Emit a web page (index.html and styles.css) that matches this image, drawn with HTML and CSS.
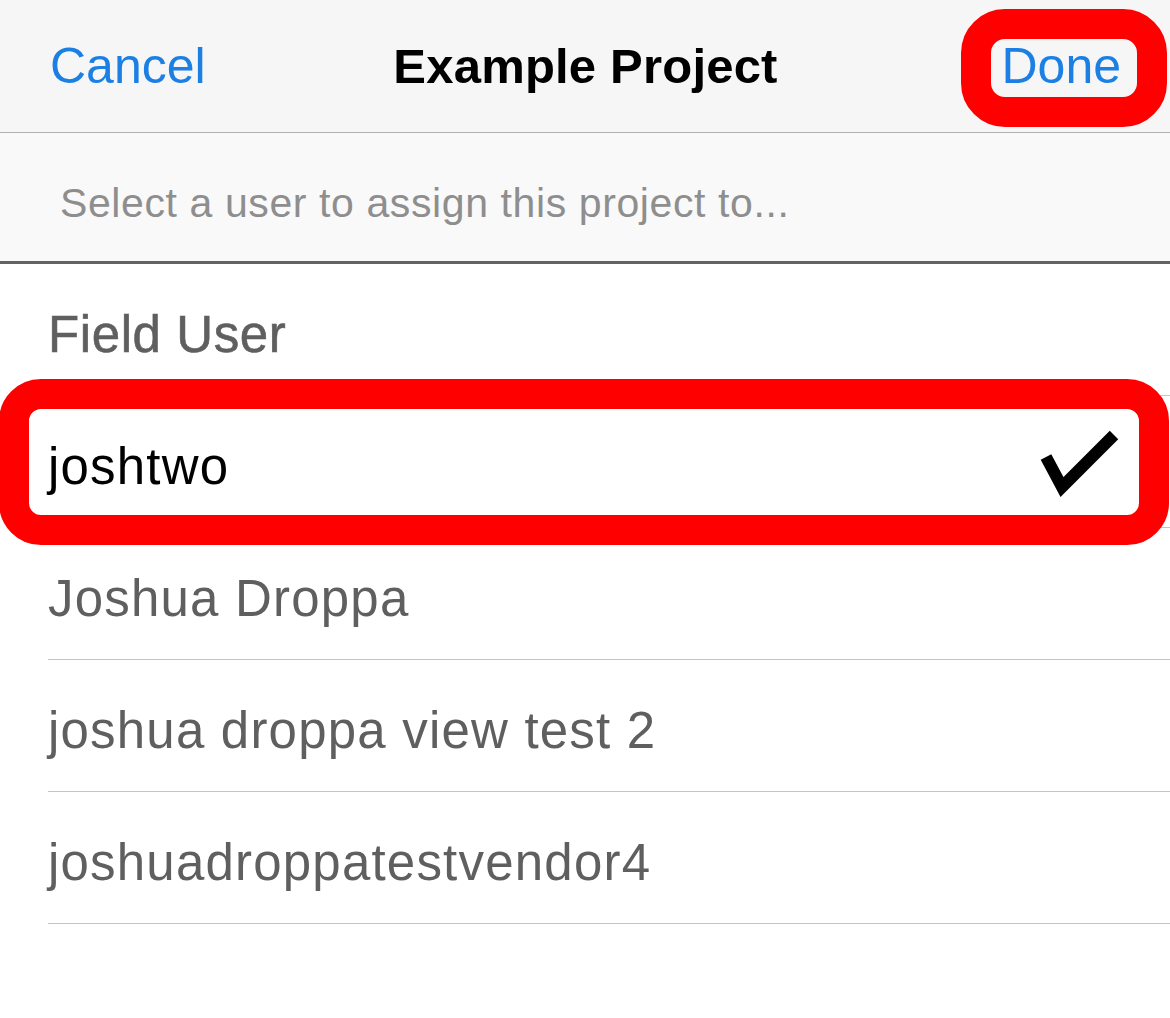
FILE: index.html
```html
<!DOCTYPE html>
<html lang="en">
<head>
    <meta charset="UTF-8">
    <meta name="viewport" content="width=device-width, initial-scale=1.0">
    <title>Example Project</title>
    <link rel="stylesheet" href="styles.css">
</head>

<body>
    <div class="nav-bar">
        <a class="nav-button cancel">Cancel</a>
        <h1 class="nav-title">Example Project</h1>
        <a class="nav-button done">Done</a>
    </div>

    <div class="prompt">Select a user to assign this project to...</div>

    <ul class="user-list">
        <li class="user-row group-title">Field User</li>
        <li class="user-row selected">
            <span>joshtwo</span>
            <svg class="check" width="80" height="70" viewBox="0 0 80 70">
                <polyline points="6,30 22,60 74,8" fill="none" stroke="#000" stroke-width="12" stroke-linejoin="miter"/>
            </svg>
        </li>
        <li class="user-row">Joshua Droppa</li>
        <li class="user-row">joshua droppa view test 2</li>
        <li class="user-row">joshuadroppatestvendor4</li>
    </ul>

    <!-- red annotation marks drawn over the screenshot -->
    <div class="mark mark-done"></div>
    <div class="mark mark-row"></div>
</body>

</html>
```

FILE: styles.css
```css
body {
    margin: 0;
    font-family: "Liberation Sans", Arial, sans-serif;
    background: #fff;
    position: relative;
    min-height: 1018px;
    overflow: hidden;
}

.nav-bar {
    display: grid;
    grid-template-columns: 1fr auto 1fr;
    align-items: center;
    height: 132px;
    padding: 0 49px 0 50px;
    background: #f6f6f6;
    border-bottom: 1px solid #b0b0b0;
}

.nav-button {
    color: #1b7fe3;
    font-size: 50px;
    text-decoration: none;
}

.done {
    justify-self: end;
}

.nav-title {
    margin: 0;
    font-size: 49px;
    font-weight: bold;
    color: #000;
    letter-spacing: 0.2px;
}

.prompt {
    height: 131px;
    display: flex;
    align-items: center;
    padding-left: 60px;
    padding-top: 12px;
    box-sizing: border-box;
    background: #f9f9f9;
    border-bottom: 3px solid #626262;
    color: #8e8e8e;
    font-size: 41px;
    letter-spacing: 0.6px;
}

.user-list {
    list-style: none;
    margin: 0;
    padding: 0 0 0 48px;
}

.user-row {
    display: flex;
    align-items: center;
    justify-content: space-between;
    height: 121px;
    padding-top: 10px;
    border-bottom: 1px solid #c4c4c4;
    color: #5f5f5f;
    font-size: 51px;
    letter-spacing: 1.2px;
}

.group-title {
    font-weight: 500;
    letter-spacing: 0.6px;
    -webkit-text-stroke: 0.6px #5f5f5f;
}

.user-row.selected {
    color: #000;
}

.check {
    margin-right: 50px;
    margin-top: -10px;
}

.mark {
    position: absolute;
    border: 30px solid #ff0000;
    box-sizing: border-box;
}

.mark-done {
    left: 961px;
    top: 9px;
    width: 206px;
    height: 118px;
    border-radius: 44px;
}

.mark-row {
    left: -1px;
    top: 379px;
    width: 1170px;
    height: 166px;
    border-radius: 42px;
}
```
